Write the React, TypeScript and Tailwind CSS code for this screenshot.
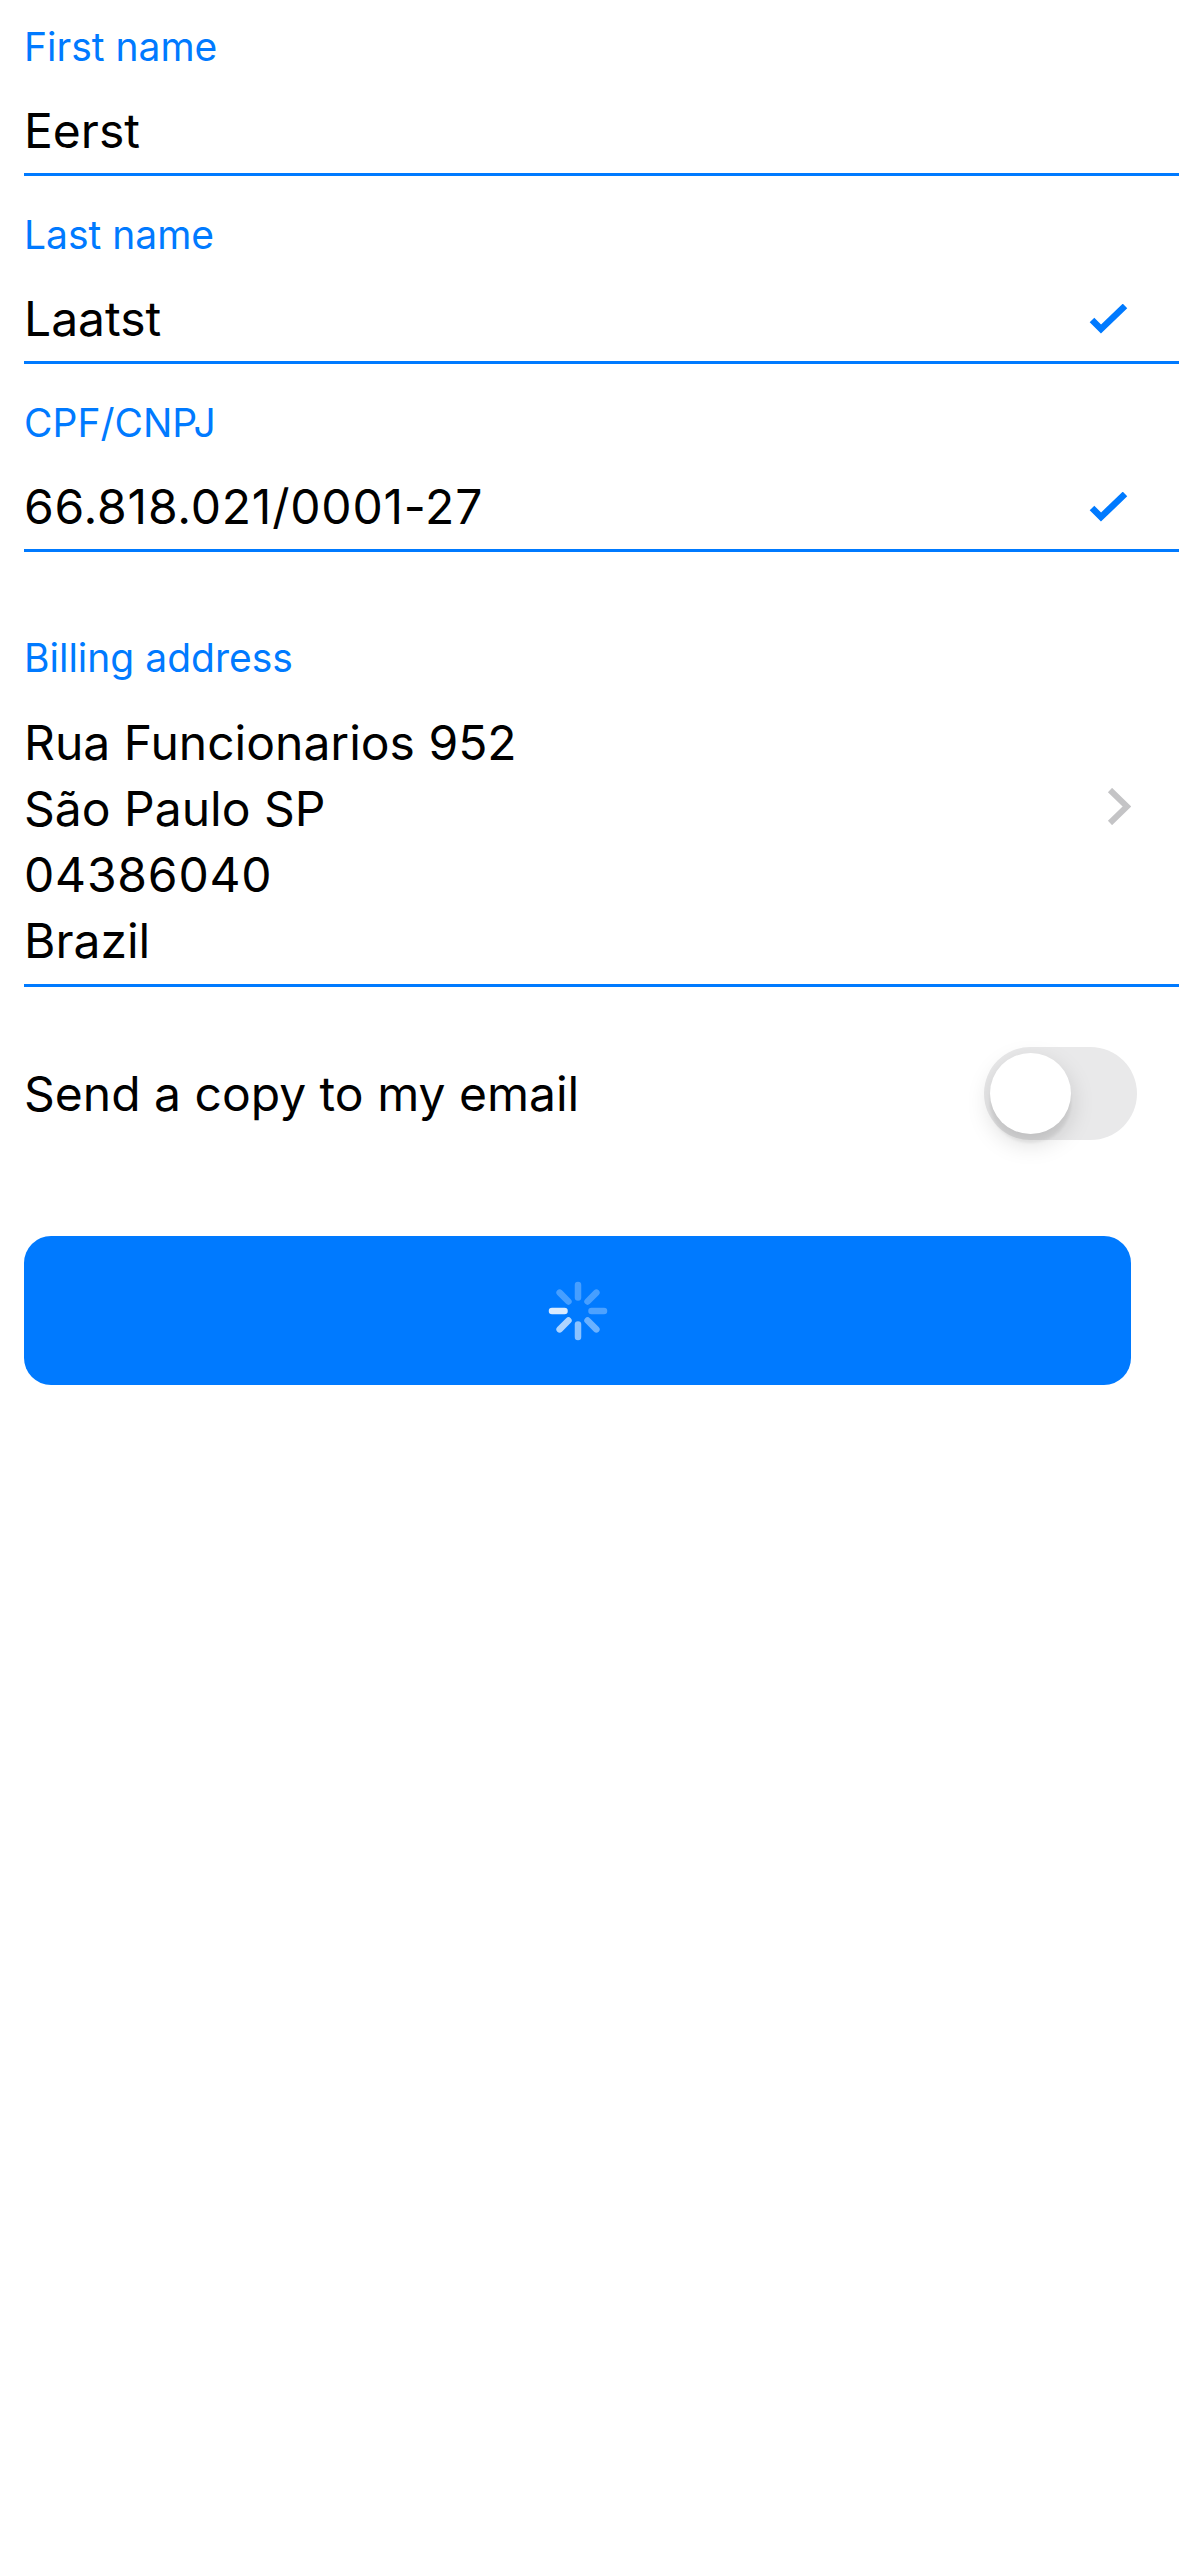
import { useState } from "react";

const BLUE = "#007AFF";

function Check() {
  return (
    <svg width="39" height="30" viewBox="0 0 39 30" className="shrink-0">
      <polyline
        points="3,16 12,25 36,2"
        fill="none"
        stroke={BLUE}
        strokeWidth="6.5"
        strokeLinecap="butt"
        strokeLinejoin="miter"
      />
    </svg>
  );
}

function Chevron() {
  return (
    <svg width="24" height="37" viewBox="0 0 24 37" className="shrink-0">
      <polyline
        points="3,2 20,18.5 3,35"
        fill="none"
        stroke="#c4c4c6"
        strokeWidth="6"
        strokeLinecap="butt"
        strokeLinejoin="miter"
      />
    </svg>
  );
}

function Spinner() {
  // 8 spokes, brightest on the left, fading clockwise
  const spokes = [
    { a: 180, o: 0.85 },
    { a: 135, o: 0.68 },
    { a: 90, o: 0.55 },
    { a: 45, o: 0.42 },
    { a: 0, o: 0.3 },
    { a: -45, o: 0.28 },
    { a: -90, o: 0.28 },
    { a: -135, o: 0.28 },
  ];
  return (
    <svg width="64" height="64" viewBox="-32 -32 64 64">
      {spokes.map((s) => {
        const r = (s.a * Math.PI) / 180;
        return (
          <line
            key={s.a}
            x1={Math.cos(r) * 13.5}
            y1={Math.sin(r) * 13.5}
            x2={Math.cos(r) * 26}
            y2={Math.sin(r) * 26}
            stroke="white"
            strokeOpacity={s.o}
            strokeWidth="6.5"
            strokeLinecap="round"
          />
        );
      })}
    </svg>
  );
}

function Field({
  label,
  value,
  checked = false,
  first = false,
  numeric = false,
}: {
  label: string;
  value: string;
  checked?: boolean;
  first?: boolean;
  numeric?: boolean;
}) {
  return (
    <div
      className={`${first ? "pt-[23px]" : "pt-[35px]"} pb-[13px] border-b-[3px] border-[#007AFF]`}
    >
      <div className="text-[39px] leading-[47px] text-[#007AFF]">{label}</div>
      <div className="mt-[32px] flex items-center justify-between pr-[51px]">
        <span
          className={`text-[48px] leading-[58px] text-black ${numeric ? "tracking-[0.8px]" : ""}`}
        >
          {value}
        </span>
        {checked && <Check />}
      </div>
    </div>
  );
}

export default function App() {
  const [copy, setCopy] = useState(false);

  return (
    <div
      className="min-h-[2556px] w-full bg-white pl-[24px]"
      style={{ fontFamily: "Inter, 'Noto Sans', sans-serif" }}
    >
      <Field first label="First name" value="Eerst" />
      <Field label="Last name" value="Laatst" checked />
      <Field label="CPF/CNPJ" value="66.818.021/0001-27" checked numeric />

      <div className="pt-[82px] pb-[10px] border-b-[3px] border-[#007AFF]">
        <div className="text-[39px] leading-[47px] text-[#007AFF]">Billing address</div>
        <div className="mt-[29px] flex justify-between pr-[48px]">
          <div className="text-[48px] leading-[66px] text-black">
            <div>Rua Funcionarios 952</div>
            <div>São Paulo SP</div>
            <div className="tracking-[0.8px]">04386040</div>
            <div>Brazil</div>
          </div>
          <div className="mt-[78px]">
            <Chevron />
          </div>
        </div>
      </div>

      <div className="mt-[60px] flex items-center justify-between pr-[42px]">
        <span className="text-[48px] leading-[58px] text-black">Send a copy to my email</span>
        <button
          onClick={() => setCopy(!copy)}
          className={`relative h-[93px] w-[153px] rounded-full ${copy ? "bg-[#34C759]" : "bg-[#e9e9ea]"}`}
        >
          <span
            className={`absolute top-[6px] h-[81px] w-[81px] rounded-full bg-white shadow-[0_9px_24px_rgba(0,0,0,0.15),0_9px_3px_rgba(0,0,0,0.06)] ${copy ? "left-[66px]" : "left-[6px]"}`}
          />
        </button>
      </div>

      <div className="mt-[96px] mr-[48px] flex h-[149px] items-center justify-center rounded-[27px] bg-[#007AFF]">
        <Spinner />
      </div>
    </div>
  );
}
